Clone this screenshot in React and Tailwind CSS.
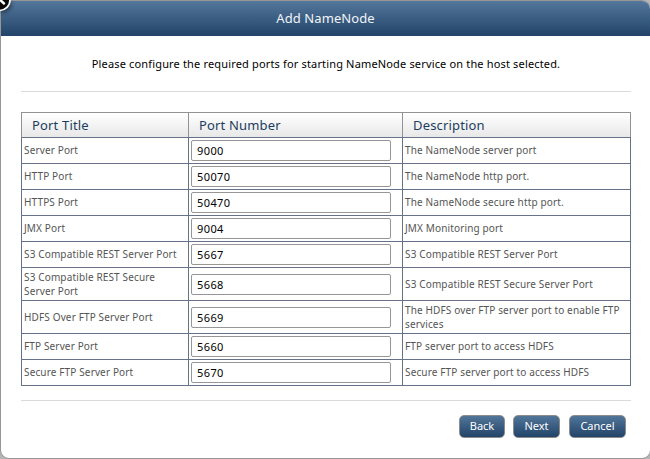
const rows = [
  { title: ["Server Port"], port: "9000", desc: ["The NameNode server port"] },
  { title: ["HTTP Port"], port: "50070", desc: ["The NameNode http port."] },
  { title: ["HTTPS Port"], port: "50470", desc: ["The NameNode secure http port."] },
  { title: ["JMX Port"], port: "9004", desc: ["JMX Monitoring port"] },
  { title: ["S3 Compatible REST Server Port"], port: "5667", desc: ["S3 Compatible REST Server Port"] },
  { title: ["S3 Compatible REST Secure", "Server Port"], port: "5668", desc: ["S3 Compatible REST Secure Server Port"], tall: true },
  { title: ["HDFS Over FTP Server Port"], port: "5669", desc: ["The HDFS over FTP server port to enable FTP", "services"], tall: true },
  { title: ["FTP Server Port"], port: "5660", desc: ["FTP server port to access HDFS"] },
  { title: ["Secure FTP Server Port"], port: "5670", desc: ["Secure FTP server port to access HDFS"] },
];

function Cell({ lines, tall }) {
  return (
    <div className={`${tall ? "pb-0" : "pb-[2px]"} flex flex-col justify-center border-r border-[#66728a] pl-[2px] text-[10px] leading-[14px] tracking-[0.14px] text-[#555]`}>
      {lines.map((line) => (
        <span key={line} className="whitespace-nowrap">{line}</span>
      ))}
    </div>
  );
}

function Heading({ children }) {
  return (
    <div className="flex items-center border-r border-[#929292] pl-[10px] text-[13px] leading-4 tracking-[0.17px] text-[#1d3d60]">
      {children}
    </div>
  );
}

function Button({ width, children }) {
  return (
    <button className={`${width} flex h-[23px] items-center justify-center rounded-[5px] border border-[#8c8c8c] bg-linear-to-b from-[#52759a] to-[#224469] text-[11px] text-white`}>
      {children}
    </button>
  );
}

export default function App() {
  return (
    <div className="relative h-[459px] w-[650px] overflow-hidden bg-[#b5b5b5] font-['Noto_Sans',sans-serif]">
      <div className="flex h-[459px] w-[651px] flex-col overflow-hidden rounded-[9px] rounded-tl-none border border-[#969696] bg-white">
        <header className="flex h-[35px] shrink-0 items-center justify-center bg-linear-to-b from-[#54779c] to-[#224469] text-[13px] tracking-[0.08px] text-[#f1f4f7]">
          Add NameNode
        </header>
        <main className="ml-5 w-[610px]">
          <p className="flex h-[56px] items-center justify-center border-b border-[#dadada] pt-[2px] text-[11px] tracking-[0.16px] whitespace-nowrap text-black">
            Please configure the required ports for starting NameNode service on the host selected.
          </p>
          <section className="mt-5">
            <div className="grid h-[26px] grid-cols-[167px_214px_228px] border-t border-b border-l border-t-[#929292] border-b-[#66728a] border-l-[#929292] bg-linear-to-b from-white to-[#e8e8e8]">
              <Heading>Port Title</Heading>
              <Heading>Port Number</Heading>
              <Heading>Description</Heading>
            </div>
            {rows.map((row) => (
              <div key={row.port} className={`${row.tall ? "h-[33px]" : "h-[26px]"} grid grid-cols-[167px_214px_228px] border-b border-l border-[#66728a]`}>
                <Cell lines={row.title} tall={row.tall} />
                <div className="flex items-center border-r border-[#66728a] pl-[2px]">
                  <input
                    defaultValue={row.port}
                    className="h-[21px] w-[200px] rounded-[2px] border border-[#969696] bg-white pl-[5px] text-[11px] tracking-[0.4px] text-black outline-none"
                  />
                </div>
                <Cell lines={row.desc} tall={row.tall} />
              </div>
            ))}
          </section>
          <footer className="mt-[14px] flex border-t border-[#dadada] pt-[14px] pl-[438px]">
            <div className="flex gap-2">
              <Button width="w-[46px]">Back</Button>
              <Button width="w-[47px]">Next</Button>
            </div>
            <div className="ml-[9px]">
              <Button width="w-[57px]">Cancel</Button>
            </div>
          </footer>
        </main>
      </div>
      <svg className="absolute top-0 left-0 drop-shadow-[1px_2px_2px_#0007]" width="14" height="14" viewBox="0 0 14 14">
        <circle cx="-0.5" cy="0" r="10.5" fill="#080808" stroke="#fff" strokeWidth="1.7" />
        <path d="M-4-4 4 3.5" stroke="#fff" strokeWidth="2.4" strokeLinecap="round" />
      </svg>
    </div>
  );
}
